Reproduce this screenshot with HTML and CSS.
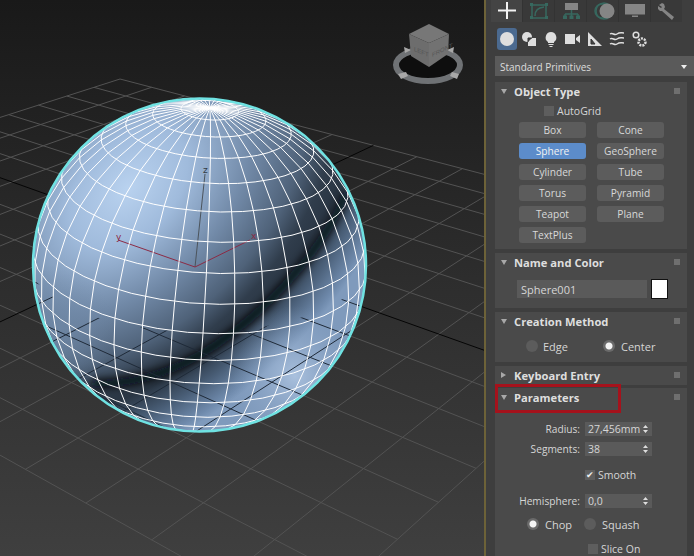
FILE: index.html
```html
<!DOCTYPE html>
<html lang="en">
<head>
<meta charset="utf-8">
<title>3ds Max Sphere</title>
<link rel="stylesheet" href="styles.css">
</head>
<body>
<div class="app">
  <main class="viewport">
    <svg class="scene" width="484" height="556" viewBox="0 0 484 556">
      <defs>
        <linearGradient id="bg" x1="0" y1="0" x2="0" y2="1">
          <stop offset="0" stop-color="#191919"/>
          <stop offset="0.5" stop-color="#2d2d2d"/>
          <stop offset="1" stop-color="#3f3f3f"/>
        </linearGradient>
        <radialGradient id="shade" gradientUnits="userSpaceOnUse" cx="128" cy="188" r="270" gradientTransform="translate(128 188) rotate(45) scale(0.85 1.3) translate(-128 -188)">
          <stop offset="0" stop-color="#b9d2ef"/>
          <stop offset="0.2" stop-color="#a0bbdc"/>
          <stop offset="0.42" stop-color="#7189a7"/>
          <stop offset="0.6" stop-color="#4f6279"/>
          <stop offset="0.7" stop-color="#303d4c"/>
          <stop offset="0.77" stop-color="#2a3644"/>
          <stop offset="0.87" stop-color="#4a5f78"/>
          <stop offset="0.97" stop-color="#6f8aac"/>
          <stop offset="1" stop-color="#7f9abc"/>
        </radialGradient>
        <radialGradient id="backlight" gradientUnits="userSpaceOnUse" cx="295" cy="376" r="70">
          <stop offset="0" stop-color="#b4cae6" stop-opacity="0.8"/>
          <stop offset="1" stop-color="#7f9abc" stop-opacity="0"/>
        </radialGradient>
        <radialGradient id="sidelight" gradientUnits="userSpaceOnUse" cx="50" cy="330" r="65">
          <stop offset="0" stop-color="#6f88a6" stop-opacity="0.85"/>
          <stop offset="1" stop-color="#6f88a6" stop-opacity="0"/>
        </radialGradient>
        <filter id="soft" x="-20%" y="-20%" width="140%" height="140%"><feGaussianBlur stdDeviation="4"/></filter>
        <clipPath id="ball"><circle cx="199.5" cy="265" r="167"/></clipPath>
        <mask id="under" maskUnits="userSpaceOnUse" x="0" y="0" width="484" height="556">
          <rect y="262" width="484" height="294" fill="#fff"/>
          <ellipse cx="199.5" cy="258" rx="172" ry="74" fill="#000"/>
        </mask>
      </defs>
      <rect width="484" height="556" fill="url(#bg)"/>
      <g id="grid" class="gridline"></g>
      <g id="axes" class="axisline"></g>
      <circle cx="199.5" cy="265" r="167" fill="url(#shade)"/>
      <g clip-path="url(#ball)">
        <circle cx="295" cy="376" r="70" fill="url(#backlight)"/>
        <circle cx="50" cy="330" r="65" fill="url(#sidelight)"/>
        <path class="band" filter="url(#soft)" d="M345 195C327 240 285 292 235 331S140 384 95 384"/>
      </g>
      <g clip-path="url(#ball)"><g mask="url(#under)"><g id="under-grid" class="undergrid"></g></g></g>
      <line class="zaxis" x1="195" y1="267" x2="205" y2="174"/>
      <polyline class="redaxis" points="118,240 195,267 250,240"/>
      <text class="axislabel" x="116" y="240">y</text>
      <text class="axislabel" x="251" y="239">x</text>
      <text class="axislabel axislabel-z" x="203" y="173">z</text>
      <g id="wire" class="wire" clip-path="url(#ball)"></g>
      <circle class="outline" cx="199.5" cy="265" r="166.5"/>
      <g class="cube">
        <ellipse class="ring-outer" cx="428" cy="65" rx="32" ry="16"/>
        <path class="marker" d="M404 47l7 3-6 3zM454 47l-7 3 6 3zM398 74l8-2 2 4-7 3zM459 74l-7-2-2 4 7 3z"/>
        <path class="face-top" d="M429 24l20 10-20 9-20-9z"/>
        <path class="face-left" d="M409 34l20 9 0 24-18-11z"/>
        <path class="face-right" d="M449 34l-20 9 0 24 19-13z"/>
        <text class="cubetext" transform="translate(414 51) skewY(22)">LEFT</text>
        <text class="cubetext" transform="translate(432 57) skewY(-26)">FRONT</text>
      </g>
    </svg>
  </main>
  <aside class="sidebar">
    <nav class="tabs">
      <span class="tab tab-on"><svg width="24" height="22" viewBox="0 0 24 22"><path class="i-white" d="M12 2v17M3 10.500h18"/></svg></span>
      <span class="tab"><svg width="20" height="22" viewBox="0 0 20 22"><path class="i-teal" d="M3 5h14v13H3z"/><path class="i-teal" d="M6 16c0-6 3-8 9-9"/><path class="f-teal" d="M1 3h3v3H1zM16 3h3v3h-3zM1 16h3v3H1zM16 16h3v3h-3z"/></svg></span>
      <span class="tab"><svg width="20" height="22" viewBox="0 0 20 22"><path class="f-gray" d="M4 3h13v7H4z"/><path class="i-teal" d="M10.500 10v4M4 14h13M4 14v2M17 14v2M10.500 14v2"/><path class="f-teal" d="M2 15.500h4V19H2zM8.500 15.500h4V19h-4zM15 15.500h4V19h-4z"/></svg></span>
      <span class="tab"><svg width="26" height="22" viewBox="0 0 26 22"><circle class="i-teal" cx="12" cy="11" r="7"/><circle class="i-teal" cx="14" cy="11" r="8"/><circle class="f-gray" cx="17" cy="11" r="7.500"/></svg></span>
      <span class="tab"><svg width="24" height="22" viewBox="0 0 24 22"><path class="f-gray" d="M2 4h20v10.500H2zM9 15.500h6V17H9z"/></svg></span>
      <span class="tab"><svg width="20" height="22" viewBox="0 0 20 22"><path class="f-gray" d="M2 5l3-2 2 1 1 3-1 2 10 8-2 3L5 11l-2 0-2-2 0-3 3 2 1-1z"/></svg></span>
    </nav>
    <div class="cmdrow">
      <span class="cmd cmd-on"><svg width="16" height="16" viewBox="0 0 16 16"><circle class="f-light" cx="8" cy="8" r="7"/></svg></span>
      <span class="cmd"><svg width="16" height="16" viewBox="0 0 16 16"><circle class="f-light" cx="6" cy="6" r="5"/><path class="f-light" d="M7 7h8v8H7z"/><path class="i-dark" d="M7 11V7h4"/></svg></span>
      <span class="cmd"><svg width="16" height="16" viewBox="0 0 16 16"><path class="f-light" d="M8 1a5.500 5.500 0 0 1 3 10v1H5v-1A5.500 5.500 0 0 1 8 1zM5.500 13h5v1h-5zM6.500 15h3v1h-3z"/></svg></span>
      <span class="cmd"><svg width="16" height="16" viewBox="0 0 16 16"><path class="f-light" d="M0 3h10v10H0zM11 7l4-3v8l-4-3z"/></svg></span>
      <span class="cmd"><svg width="16" height="16" viewBox="0 0 16 16"><path class="f-light" d="M1 1l14 14H1z"/><path class="i-dark" d="M4 8l4 5H4z"/></svg></span>
      <span class="cmd"><svg width="16" height="16" viewBox="0 0 16 16"><path class="i-light" d="M1 3c3-2 4 2 7 0s4-1 7-1M1 8c3-2 4 2 7 0s4-1 7-1M1 13c3-2 4 2 7 0s4-1 7-1"/></svg></span>
      <span class="cmd"><svg width="16" height="16" viewBox="0 0 16 16"><circle class="i-light" cx="5" cy="4" r="2.800"/><circle class="i-light gear" cx="11" cy="11" r="3.500"/></svg></span>
    </div>
    <div class="dropdown"><span>Standard Primitives</span><i class="dropdown-arrow"></i></div>

    <section class="panel panel-object">
      <header class="panel-head"><i class="tri"></i><h2>Object Type</h2><i class="grip"></i></header>
      <div class="autogrid"><i class="check"></i><span>AutoGrid</span></div>
      <div class="buttons">
        <button class="btn">Box</button><button class="btn">Cone</button>
        <button class="btn btn-on">Sphere</button><button class="btn">GeoSphere</button>
        <button class="btn">Cylinder</button><button class="btn">Tube</button>
        <button class="btn">Torus</button><button class="btn">Pyramid</button>
        <button class="btn">Teapot</button><button class="btn">Plane</button>
        <button class="btn">TextPlus</button>
      </div>
    </section>

    <section class="panel panel-name">
      <header class="panel-head"><i class="tri"></i><h2>Name and Color</h2><i class="grip"></i></header>
      <div class="namerow"><span class="nameinput">Sphere001</span><i class="swatch"></i></div>
    </section>

    <section class="panel panel-method">
      <header class="panel-head"><i class="tri"></i><h2>Creation Method</h2><i class="grip"></i></header>
      <div class="radios"><i class="radio"></i><span class="radio-edge">Edge</span><i class="radio radio-on"></i><span class="radio-label">Center</span></div>
    </section>

    <section class="panel panel-key">
      <header class="panel-head"><i class="tri tri-closed"></i><h2>Keyboard Entry</h2><i class="grip"></i></header>
    </section>

    <section class="panel panel-params">
      <header class="panel-head"><i class="tri"></i><h2>Parameters</h2><i class="grip"></i><span class="redbox"></span></header>
      <div class="row row-radius"><label>Radius:</label><span class="spin">27,456mm<i class="arrows"></i></span></div>
      <div class="row row-seg"><label>Segments:</label><span class="spin">38<i class="arrows"></i></span></div>
      <div class="smooth"><i class="check check-on">✔</i><span>Smooth</span></div>
      <div class="row row-hemi"><label>Hemisphere:</label><span class="spin">0,0<i class="arrows"></i></span></div>
      <div class="radios radios-chop"><i class="radio radio-on"></i><span class="radio-chop">Chop</span><i class="radio"></i><span class="radio-label">Squash</span></div>
      <div class="slice"><i class="check"></i><span>Slice On</span></div>
    </section>
  </aside>
</div>
<script src="script.js"></script>
</body>
</html>
```
FILE: styles.css
```css
html, body { margin: 0; padding: 0; background: #3c3c3c; }
body { width: 694px; height: 556px; overflow: hidden; font-family: "Open Sans", "Liberation Sans", sans-serif; }
.app { display: flex; width: 694px; height: 556px; overflow: hidden; }

.viewport { width: 484px; height: 556px; flex: none; border-right: 2px solid #6d6238; }
.scene { display: block; }
.gridline line { stroke: #535353; stroke-width: 1; }
.axisline line { stroke: #050505; stroke-width: 1; }
.undergrid line { stroke: #1f2a38; stroke-width: 1; }
.band { fill: none; stroke: #04070b; stroke-width: 8; stroke-linecap: round; }
.zaxis { stroke: #4c545c; stroke-width: 1; }
.redaxis { fill: none; stroke: #8c2b45; stroke-width: 1; }
.axislabel { font: 9px "DejaVu Sans", sans-serif; fill: #8c2b45; }
.axislabel-z { fill: #333b44; }
.wire path { fill: none; stroke: #fff; stroke-width: 1; }
.outline { fill: none; stroke: #6fe2e2; stroke-width: 2.5; }
.ring-outer { fill: #0e0e0e; stroke: #6f7275; stroke-width: 6; }
.marker { fill: #a8a8a8; }
.face-top { fill: #777; }
.face-left { fill: #6d6d6d; }
.face-right { fill: #727272; }
.cubetext { font: 6px "Liberation Sans", sans-serif; fill: #565656; }

.sidebar { width: 208px; height: 556px; flex: none; box-sizing: border-box; padding: 0 7px 0 9px; background: #3e3e3e; overflow: hidden; color: #d6d6d6; font-size: 10.5px; }

.tabs { display: flex; height: 22px; margin-left: -4px; margin-right: 5px; gap: 1px; background: #333; }
.tab { flex: 1; display: flex; align-items: center; justify-content: center; background: #393939; }
.tab-on { background: #444; }
.i-white { fill: none; stroke: #f2f2f2; stroke-width: 2; }
.i-teal { fill: none; stroke: #37685f; stroke-width: 1.500; }
.f-teal { fill: #37685f; }
.f-gray { fill: #858585; }
.f-light { fill: #dedede; }
.i-light { fill: none; stroke: #dedede; stroke-width: 1.500; }
.gear { stroke-dasharray: 2 1; stroke-width: 2.500; }
.i-dark { fill: #444; stroke: #333; stroke-width: 1; }

.cmdrow { display: flex; align-items: center; gap: 2px; height: 22px; margin-top: 6px; margin-left: 2px; }
.cmd { width: 20px; height: 22px; display: flex; align-items: center; justify-content: center; flex: none; }
.cmd-on { background: #4b6a90; border-radius: 3px; }

.dropdown { display: flex; align-items: center; justify-content: space-between; box-sizing: border-box; height: 20px; margin: 6px -7px 0 0; padding: 2px 7px 0 5px; background: #5a5a5a; font-size: 10px; color: #dcdcdc; }
.dropdown-arrow { width: 0; height: 0; border: 3px solid transparent; border-top: 4px solid #eee; border-bottom: 0; }

.panel { background: #4a4a4a; margin-top: 4px; }
.panel-object { margin-top: 6px; height: 167px; }
.panel-name { height: 55px; }
.panel-method { height: 50px; }
.panel-key { height: 19px; margin-top: 4px; }
.panel-params { height: 168px; margin-top: 3px; }
.panel-head { position: relative; display: flex; align-items: center; box-sizing: border-box; height: 20px; padding: 0 7px 2px 6px; }
.panel-head h2 { flex: 1; margin: 0 0 0 7px; font-size: 11.2px; font-weight: 700; color: #dedede; }
.tri { width: 0; height: 0; border: 3px solid transparent; border-top: 5px solid #a8a8a8; border-bottom: 0; }
.tri-closed { border: 3px solid transparent; border-left: 5px solid #a8a8a8; border-right: 0; margin-right: 1px; }
.grip { width: 6px; height: 6px; background-image: radial-gradient(circle, #707070 0 0.7px, transparent 1px); background-size: 2px 2px; }
.redbox { position: absolute; left: 0; top: -4px; width: 120px; height: 23px; border: 3px solid #a5121c; }

.check { display: block; width: 10px; height: 10px; background: #5e5e5e; flex: none; }
.check-on { font-size: 9px; line-height: 10px; text-align: center; font-style: normal; color: #eee; }
.autogrid { display: flex; align-items: center; gap: 3px; margin: 3px 0 0 49px; height: 12px; }

.buttons { display: grid; grid-template-columns: 67px 67px; grid-auto-rows: 16px; column-gap: 11px; row-gap: 5px; margin: 5px 0 0 24px; }
.btn { border: 0; padding: 1px 0 0; border-radius: 3px; background: #5c5c5c; color: #d9d9d9; font: 10.2px/15px "Open Sans", "Liberation Sans", sans-serif; }
.btn-on { background: #5c8cca; color: #f2f2f2; }

.namerow { display: flex; align-items: center; gap: 4px; margin: 6px 0 0 22px; }
.nameinput { width: 126px; height: 18px; padding-left: 4px; background: #5a5a5a; line-height: 19px; color: #d6d6d6; font-size: 11px; }
.swatch { width: 15px; height: 18px; background: #fff; border: 1px solid #111; }

.radios { display: flex; align-items: center; height: 14px; margin: 7px 0 0 31px; font-size: 11px; }
.radio { width: 12px; height: 12px; border-radius: 50%; background: #5c5c5c; flex: none; }
.radio-on { background: radial-gradient(circle, #f4f4f4 0 3px, #6a6a6a 4px); }
.radio-edge { margin-left: 5px; width: 60px; }
.radio-label { margin-left: 6px; }
.radios-chop { margin: 9px 0 0 32px; }
.radio-chop { margin-left: 6px; width: 39px; }

.row { display: flex; align-items: center; gap: 5px; height: 14px; }
.row label { width: 85px; text-align: right; font-size: 10.2px; }
.row-radius { margin-top: 14px; }
.row-seg { margin-top: 6px; }
.row-hemi { margin-top: 14px; }
.spin { position: relative; width: 64px; height: 14px; padding-left: 3px; background: #5a5a5a; line-height: 14px; }
.arrows { position: absolute; right: 4px; top: 3px; width: 5px; height: 8px; background: #ddd; clip-path: polygon(50% 0, 100% 3px, 0 3px, 0 5px, 100% 5px, 50% 8px, 0 5px, 0 3px); }
.smooth { display: flex; align-items: center; gap: 3px; margin: 14px 0 0 90px; height: 10px; }
.slice { display: flex; align-items: center; gap: 3px; margin: 13px 0 0 93px; height: 10px; }
```
FILE: script.js
```js
(function () {
  var NS = 'http://www.w3.org/2000/svg';
  function add(parent, tag, attrs) {
    var el = document.createElementNS(NS, tag);
    for (var k in attrs) el.setAttribute(k, attrs[k]);
    parent.appendChild(el);
    return el;
  }

  // floor grid: plane with horizon at y = H, straight lines in (x/w, 1/w)
  var H = -312;
  function fromG(g) { return [g[0] / g[1], H + 1 / g[1]]; }
  var g0 = [0.30691, 0.0025575];
  var di = [0.0728, -0.000053];
  var dj = [-0.0716, -0.0000534];
  function P(i, j) { return fromG([g0[0] + i * di[0] + j * dj[0], g0[1] + i * di[1] + j * dj[1]]); }
  var N = 14, M = 14, AI = 7, AJ = 7;
  var grid = document.getElementById('grid');
  var axes = document.getElementById('axes');
  var under = document.getElementById('under-grid');
  function seg(parent, a, b) { add(parent, 'line', { x1: a[0], y1: a[1], x2: b[0], y2: b[1] }); }
  for (var i = 0; i <= N; i++) {
    var a = P(i, 0), b = P(i, M);
    seg(i === AI ? axes : grid, a, b);
    seg(under, a, b);
  }
  for (var j = 0; j <= M; j++) {
    var c = P(0, j), d = P(N, j);
    seg(j === AJ ? axes : grid, c, d);
    seg(under, c, d);
  }

  // wire sphere, 38 segments, tilted, rolled, in perspective
  var CX = 199.5, CY = 265, R = 167, D = 8, F = R * Math.sqrt(D * D - 1);
  var T = 26 * Math.PI / 180, Q = 3.8 * Math.PI / 180, PH = 0.04;
  function proj(lat, lon) {
    var x = Math.cos(lat) * Math.cos(lon), y = Math.sin(lat), z = Math.cos(lat) * Math.sin(lon);
    var y1 = y * Math.cos(T) - z * Math.sin(T), z1 = y * Math.sin(T) + z * Math.cos(T);
    var sx = x * Math.cos(Q) + y1 * Math.sin(Q), sy = -x * Math.sin(Q) + y1 * Math.cos(Q);
    var s = F / (D - z1);
    return { x: CX + sx * s, y: CY - sy * s, vis: z1 > 1 / D - 0.02 };
  }
  var wire = document.getElementById('wire');
  function strip(points) {
    var d = '', pen = false;
    points.forEach(function (p) {
      if (p.vis) { d += (pen ? 'L' : 'M') + p.x.toFixed(1) + ' ' + p.y.toFixed(1); pen = true; } else { pen = false; }
    });
    if (d) add(wire, 'path', { d: d });
  }
  var k, m, pts, step = 2 * Math.PI / 38;
  for (k = 1; k < 19; k++) {
    pts = [];
    for (m = -19; m <= 19; m++) pts.push(proj(Math.PI / 2 - k * Math.PI / 19, Math.PI / 2 + m * step + PH));
    strip(pts);
  }
  for (m = 0; m < 38; m++) {
    pts = [];
    for (k = 0; k <= 19; k++) pts.push(proj(Math.PI / 2 - k * Math.PI / 19, m * step + PH));
    strip(pts);
  }
})();
```
